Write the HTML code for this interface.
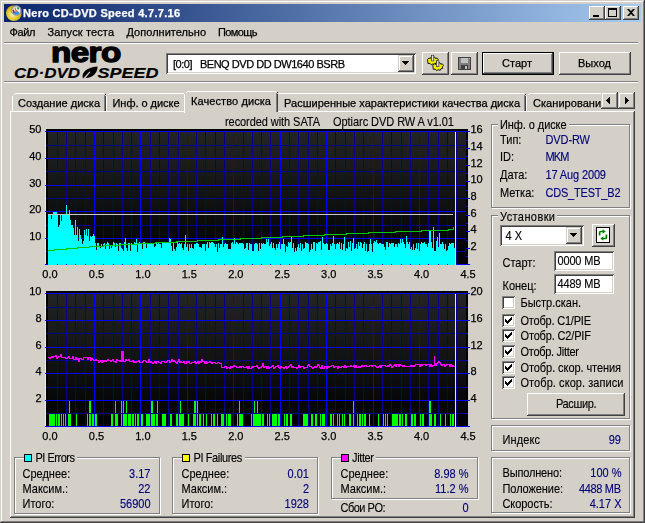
<!DOCTYPE html>
<html lang="ru"><head><meta charset="utf-8"><title>Nero CD-DVD Speed 4.7.7.16</title>
<style>
html,body{margin:0;padding:0}
body{width:645px;height:523px;overflow:hidden;background:#d4d0c8;position:relative;font:11px 'Liberation Sans',sans-serif;color:#000}
#w{position:absolute;left:0;top:0;width:645px;height:523px;overflow:hidden;background:#d4d0c8}
#w div,#w svg{position:absolute}
.t{white-space:pre;line-height:13px;height:13px;font-size:11px;-webkit-text-stroke:0.25px currentColor}
.ms{transform:scaleY(1.14);transform-origin:0 10.5px;-webkit-text-stroke:0.12px currentColor}
.lg{background:#d4d0c8;box-shadow:-2px 0 0 #d4d0c8,2px 0 0 #d4d0c8}
.raised{background:#d4d0c8;box-shadow:inset -1px -1px 0 #404040,inset 1px 1px 0 #fff,inset -2px -2px 0 #808080,inset 2px 2px 0 #d4d0c8}
.raised2{background:#d4d0c8;box-shadow:inset -1px -1px 0 #404040,inset 1px 1px 0 #d4d0c8,inset -2px -2px 0 #808080,inset 2px 2px 0 #fff}
.sunken{background:#fff;box-shadow:inset 1px 1px 0 #808080,inset -1px -1px 0 #fff,inset 2px 2px 0 #404040,inset -2px -2px 0 #d4d0c8}
.grp{border:1px solid #808080;box-shadow:1px 1px 0 #fff,inset 1px 1px 0 #fff;box-sizing:border-box}
.sep{height:1px;background:#808080;box-shadow:0 1px 0 #fff}
.cb{width:13px;height:13px}
.sq{width:6px;height:6px;border:1px solid #000}
.tab{background:#d4d0c8;box-sizing:border-box}
</style></head><body>
<div id="w">
<!-- window frame -->
<div style="left:0;top:0;width:645px;height:523px;box-shadow:inset -1px -1px 0 #404040,inset 1px 1px 0 #d4d0c8,inset -2px -2px 0 #808080,inset 2px 2px 0 #fff"></div>
<!-- title bar -->
<div style="left:4px;top:4px;width:637px;height:18px;background:linear-gradient(to right,#0a246a,#a6caf0)"></div>
<svg style="left:6px;top:5px" width="16" height="16" viewBox="0 0 16 16">
 <defs><radialGradient id="cdg" cx="0.42" cy="0.6" r="0.62"><stop offset="0" stop-color="#f6efb8"/><stop offset="0.45" stop-color="#e6cf3c"/><stop offset="0.8" stop-color="#cdb21c"/><stop offset="1" stop-color="#8c7a18"/></radialGradient></defs>
 <circle cx="7.9" cy="8.1" r="7.9" fill="url(#cdg)"/>
 <circle cx="10.3" cy="5.4" r="4.6" fill="#eef0f6" stroke="#8e92a2" stroke-width="1.3"/>
 <path d="M7 7.500a3.6 3.6 0 0 0 6.5 0.300l-2.5-2.300z" fill="#2a96e6"/>
 <path d="M7.4 3.600l1.5 3.8-1.4 1-0.9-2.800z" fill="#b81c10"/><path d="M8.6 2.400l1.2 0.2 0.4 2.3 1.8 1.8-0.8 0.6-2.2-2z" fill="#f26a2c"/>
 <path d="M10.6 2.200l2.4 0.4 0.3 1.6-1.6 0.200z" fill="#2c9a34"/><circle cx="7.6" cy="4" r="0.7" fill="#f4d820"/>
</svg>
<!-- caption buttons -->
<div class="raised" style="left:589px;top:6px;width:16px;height:14px"></div>
<div class="raised" style="left:605px;top:6px;width:16px;height:14px"></div>
<div class="raised" style="left:623px;top:6px;width:16px;height:14px"></div>
<svg style="left:589px;top:6px" width="50" height="14" viewBox="0 0 50 14" shape-rendering="crispEdges">
 <rect x="4" y="9" width="6" height="2" fill="#000"/>
 <rect x="19" y="2" width="8" height="8" fill="none" stroke="#000" stroke-width="1" transform="translate(0.5,0.5)"/><rect x="19" y="2" width="9" height="2" fill="#000"/>
 <path d="M38 3h2l2 2 2-2h2l-3 3.5 3 3.5h-2l-2-2-2 2h-2l3-3.5z" fill="#000" shape-rendering="auto"/>
</svg>
<!-- separators -->
<div class="sep" style="left:4px;top:42px;width:634px"></div>
<div class="sep" style="left:4px;top:81px;width:634px"></div>
<!-- logo -->
<svg style="left:5px;top:43px" width="160" height="38" viewBox="0 0 160 38">
 <g transform="translate(46.1,19.1) scale(1.055,0.89)"><text x="0" y="0" font-family="'Liberation Sans',sans-serif" font-weight="bold" font-size="31.5" fill="#000" stroke="#000" stroke-width="1.5" stroke-linejoin="round" letter-spacing="-0.6">nero</text></g>
 <text x="9" y="35.4" font-family="'Liberation Sans',sans-serif" font-weight="bold" font-style="italic" font-size="14" fill="#000" stroke="#000" stroke-width="0.15" textLength="66" lengthAdjust="spacingAndGlyphs">CD·DVD</text>
 <path d="M78 35.5c-2-5 3-11.5 14.5-12c0.5 5-4 11.5-12 11.5l5-6-1-0.5z" fill="#000"/>
 <text x="92.5" y="35.4" font-family="'Liberation Sans',sans-serif" font-weight="bold" font-style="italic" font-size="14" fill="#000" stroke="#000" stroke-width="0.15" textLength="61" lengthAdjust="spacingAndGlyphs">SPEED</text>
</svg>
<!-- drive combo -->
<div class="sunken" style="left:166px;top:53px;width:250px;height:21px"></div>
<div class="raised2" style="left:398px;top:55px;width:16px;height:17px"></div>
<svg style="left:398px;top:55px" width="16" height="17" viewBox="0 0 16 17" shape-rendering="crispEdges"><path d="M4 6h7v1h-1v1h-1v1h-1v1h-1v-1h-1v-1h-1v-1h-1z" fill="#000"/></svg>
<!-- toolbar buttons -->
<div class="raised" style="left:422px;top:52px;width:27px;height:23px"></div>
<svg style="left:426px;top:54px" width="20" height="18" viewBox="426 54 20 18">
 <g fill="#f4ec00" stroke="#000" stroke-width="0.9" stroke-linejoin="round">
  <path d="M427.5 59.500l1.5-1.5 1.2 0.6 1-1.600h3.400l1 1.5 1.4-0.5 1.2 1.6-1.2 1.2 0.5 1.6-1.8 0.5-0.8 1.6-2-0.6-1.6 0.9-1.3-1.4-2 0.1-0.2-1.800z"/>
  <path d="M432.8 65.300l1.5-1.5 1.2 0.6 1-1.600h3.400l1 1.5 1.4-0.5 1.2 1.6-1.2 1.2 0.5 1.6-1.8 0.5-0.8 1.6-2-0.6-1.6 0.9-1.3-1.4-2 0.1-0.2-1.800z"/>
 </g>
 <g stroke="#303038" stroke-width="0.7"><rect x="431.4" y="55.3" width="2.4" height="5.6" fill="#b8bcc8"/><rect x="436.5" y="60.8" width="2.4" height="5.6" fill="#b8bcc8"/></g>
 <path d="M432.6 55.600v5M437.7 61.100v5" stroke="#fff" stroke-width="0.7"/>
</svg>
<div class="raised" style="left:451px;top:52px;width:27px;height:23px"></div>
<svg style="left:458px;top:57px" width="13" height="13" viewBox="0 0 13 13" shape-rendering="crispEdges">
 <rect x="0" y="0" width="13" height="13" fill="#404040"/><rect x="1" y="1" width="11" height="11" fill="#808080"/>
 <rect x="3" y="1" width="7" height="5" fill="#c0c0c0"/><rect x="3" y="8" width="7" height="4" fill="#404040"/><rect x="7" y="9" width="2" height="3" fill="#c0c0c0"/><rect x="11" y="1" width="1" height="1" fill="#c0c0c0"/>
</svg>
<div style="left:482px;top:52px;width:72px;height:23px;background:#000"></div>
<div class="raised" style="left:483px;top:53px;width:70px;height:21px"></div>
<div class="raised" style="left:559px;top:52px;width:72px;height:23px"></div>
<!-- tab pane -->
<div style="left:10px;top:111px;width:625px;height:407px;box-shadow:inset -1px -1px 0 #404040,inset 1px 1px 0 #fff,inset -2px -2px 0 #808080,inset 2px 2px 0 #d4d0c8"></div>
<!-- tabs -->
<svg style="left:10px;top:90px" width="625" height="24" viewBox="10 90 625 24" shape-rendering="crispEdges">
 <g fill="none">
 <!-- unselected tab shapes: white top/left, dark right -->
 <path d="M12.5 111V95.5M13.5 94.5h1M14.5 93.5H104" stroke="#fff"/><path d="M104.5 95V111" stroke="#808080"/><path d="M104.5 94.5h1M105.5 95.5V111" stroke="#404040"/>
 <path d="M106.5 111V95.5M107.5 94.5h1M108.5 93.5H184" stroke="#fff"/>
 <path d="M278.5 93.5H524" stroke="#fff"/><path d="M524.5 95V111" stroke="#808080"/><path d="M524.5 94.5h1M525.5 95.5V111" stroke="#404040"/>
 <path d="M526.5 111V95.5M527.5 94.5h1M528.5 93.5H601" stroke="#fff"/>
 </g>
 <!-- selected tab -->
 <rect x="184" y="91" width="94" height="22" fill="#d4d0c8"/>
 <g fill="none"><path d="M184.5 113V93.5M185.5 92.5h1M186.5 91.5H276" stroke="#fff"/><path d="M276.5 93V112" stroke="#808080"/><path d="M276.5 92.5h1M277.5 93.5V112" stroke="#404040"/></g>
</svg>
<div class="t" style="left:533px;top:96.5px;width:68px;overflow:hidden;letter-spacing:0.05px;will-change:transform">Сканирование диска</div>
<div class="raised2" style="left:601px;top:92px;width:17px;height:17px"></div>
<div class="raised2" style="left:618px;top:92px;width:17px;height:17px"></div>
<svg style="left:601px;top:92px" width="34" height="17" viewBox="0 0 34 17" shape-rendering="crispEdges">
 <path d="M9 5v7h-1v-1h-1v-1h-1v-1h-1v-1h1v-1h1v-1h1v-1z" fill="#000"/><path d="M24 5v7h1v-1h1v-1h1v-1h1v-1h-1v-1h-1v-1h-1v-1z" fill="#000"/>
</svg>
<svg class="chart" width="645" height="523" viewBox="0 0 645 523" shape-rendering="crispEdges"><defs><linearGradient id="cg" x1="0" y1="0" x2="0" y2="1"><stop offset="0" stop-color="#242424"/><stop offset="1" stop-color="#000"/></linearGradient></defs><rect x="45" y="130" width="1" height="135" fill="#ece9e2"/><rect x="46" y="129" width="422" height="136" fill="#000"/><rect x="48" y="131" width="418" height="134" fill="url(#cg)"/><rect x="45" y="292" width="1" height="135" fill="#ece9e2"/><rect x="46" y="291" width="422" height="136" fill="#000"/><rect x="48" y="293" width="418" height="134" fill="url(#cg)"/><path d="M49 414h6V427h-6zM56 414h1V427h-1zM58 414h2V427h-2zM61 414h1V427h-1zM63 414h1V427h-1zM65 414h2V427h-2zM68 414h3V427h-3zM76 414h1V427h-1zM87 414h1V427h-1zM89 414h2V427h-2zM92 414h2V427h-2zM95 414h2V427h-2zM103 414h1V427h-1zM111 414h3V427h-3zM115 414h3V427h-3zM121 414h6V427h-6zM128 414h6V427h-6zM135 414h1V427h-1zM137 414h2V427h-2zM141 414h2V427h-2zM146 414h6V427h-6zM151 414h4V427h-4zM156 414h2V427h-2zM162 414h4V427h-4zM170 414h2V427h-2zM176 414h2V427h-2zM179 414h5V427h-5zM187 414h2V427h-2zM193 414h4V427h-4zM199 414h2V427h-2zM203 414h1V427h-1zM206 414h1V427h-1zM211 414h1V427h-1zM213 414h2V427h-2zM217 414h1V427h-1zM221 414h4V427h-4zM226 414h1V427h-1zM228 414h3V427h-3zM233 414h1V427h-1zM237 414h1V427h-1zM239 414h5V427h-5zM251 414h1V427h-1zM253 414h5V427h-5zM256 414h5V427h-5zM262 414h2V427h-2zM267 414h1V427h-1zM269 414h2V427h-2zM272 414h5V427h-5zM278 414h3V427h-3zM284 414h1V427h-1zM286 414h2V427h-2zM290 414h2V427h-2zM298 414h1V427h-1zM303 414h5V427h-5zM311 414h2V427h-2zM315 414h2V427h-2zM320 414h1V427h-1zM322 414h3V427h-3zM330 414h2V427h-2zM333 414h1V427h-1zM337 414h1V427h-1zM339 414h1V427h-1zM342 414h1V427h-1zM344 414h1V427h-1zM349 414h2V427h-2zM353 414h1V427h-1zM357 414h1V427h-1zM359 414h2V427h-2zM362 414h2V427h-2zM363 414h3V427h-3zM369 414h1V427h-1zM378 414h1V427h-1zM383 414h1V427h-1zM385 414h1V427h-1zM387 414h1V427h-1zM392 414h6V427h-6zM399 414h4V427h-4zM405 414h2V427h-2zM411 414h2V427h-2zM414 414h2V427h-2zM419 414h2V427h-2zM422 414h2V427h-2zM428 414h4V427h-4zM434 414h2V427h-2zM440 414h1V427h-1zM445 414h1V427h-1zM450 414h1V427h-1zM452 414h2V427h-2zM69 400h1V427h-1zM89 400h2V427h-2zM115 400h1V427h-1zM121 400h3V427h-3zM126 400h1V427h-1zM151 400h2V427h-2zM157 400h1V427h-1zM180 400h1V427h-1zM194 400h4V427h-4zM233 400h1V427h-1zM239 400h1V427h-1zM254 400h1V427h-1zM257 400h1V427h-1zM353 400h1V427h-1zM429 400h2V427h-2z" fill="#00ff00"/><rect x="57" y="131" width="1" height="134" fill="#00008c"/><rect x="66" y="131" width="1" height="134" fill="#00008c"/><rect x="75" y="131" width="1" height="134" fill="#00008c"/><rect x="85" y="131" width="1" height="134" fill="#00008c"/><rect x="94" y="131" width="1" height="134" fill="#0000ff"/><rect x="103" y="131" width="1" height="134" fill="#00008c"/><rect x="113" y="131" width="1" height="134" fill="#00008c"/><rect x="122" y="131" width="1" height="134" fill="#00008c"/><rect x="131" y="131" width="1" height="134" fill="#00008c"/><rect x="140" y="131" width="1" height="134" fill="#0000ff"/><rect x="150" y="131" width="1" height="134" fill="#00008c"/><rect x="159" y="131" width="1" height="134" fill="#00008c"/><rect x="168" y="131" width="1" height="134" fill="#00008c"/><rect x="178" y="131" width="1" height="134" fill="#00008c"/><rect x="187" y="131" width="1" height="134" fill="#0000ff"/><rect x="196" y="131" width="1" height="134" fill="#00008c"/><rect x="205" y="131" width="1" height="134" fill="#00008c"/><rect x="215" y="131" width="1" height="134" fill="#00008c"/><rect x="224" y="131" width="1" height="134" fill="#00008c"/><rect x="233" y="131" width="1" height="134" fill="#0000ff"/><rect x="243" y="131" width="1" height="134" fill="#00008c"/><rect x="252" y="131" width="1" height="134" fill="#00008c"/><rect x="261" y="131" width="1" height="134" fill="#00008c"/><rect x="270" y="131" width="1" height="134" fill="#00008c"/><rect x="280" y="131" width="1" height="134" fill="#0000ff"/><rect x="289" y="131" width="1" height="134" fill="#00008c"/><rect x="298" y="131" width="1" height="134" fill="#00008c"/><rect x="308" y="131" width="1" height="134" fill="#00008c"/><rect x="317" y="131" width="1" height="134" fill="#00008c"/><rect x="326" y="131" width="1" height="134" fill="#0000ff"/><rect x="335" y="131" width="1" height="134" fill="#00008c"/><rect x="345" y="131" width="1" height="134" fill="#00008c"/><rect x="354" y="131" width="1" height="134" fill="#00008c"/><rect x="363" y="131" width="1" height="134" fill="#00008c"/><rect x="373" y="131" width="1" height="134" fill="#0000ff"/><rect x="382" y="131" width="1" height="134" fill="#00008c"/><rect x="391" y="131" width="1" height="134" fill="#00008c"/><rect x="401" y="131" width="1" height="134" fill="#00008c"/><rect x="410" y="131" width="1" height="134" fill="#00008c"/><rect x="419" y="131" width="1" height="134" fill="#0000ff"/><rect x="428" y="131" width="1" height="134" fill="#00008c"/><rect x="438" y="131" width="1" height="134" fill="#00008c"/><rect x="447" y="131" width="1" height="134" fill="#00008c"/><rect x="456" y="131" width="1" height="134" fill="#00008c"/><rect x="45" y="131" width="421" height="1" fill="#0000ff"/><rect x="46" y="145" width="420" height="1" fill="#00008c"/><rect x="45" y="158" width="421" height="1" fill="#0000ff"/><rect x="46" y="171" width="420" height="1" fill="#00008c"/><rect x="45" y="185" width="421" height="1" fill="#0000ff"/><rect x="46" y="198" width="420" height="1" fill="#00008c"/><rect x="45" y="211" width="421" height="1" fill="#0000ff"/><rect x="46" y="225" width="420" height="1" fill="#00008c"/><rect x="45" y="238" width="421" height="1" fill="#0000ff"/><rect x="46" y="251" width="420" height="1" fill="#00008c"/><rect x="45" y="264" width="421" height="1" fill="#0000ff"/><rect x="45" y="131" width="425" height="1" fill="#0000ff"/><rect x="45" y="264" width="425" height="1" fill="#0000ff"/><rect x="57" y="293" width="1" height="134" fill="#00008c"/><rect x="66" y="293" width="1" height="134" fill="#00008c"/><rect x="75" y="293" width="1" height="134" fill="#00008c"/><rect x="85" y="293" width="1" height="134" fill="#00008c"/><rect x="94" y="293" width="1" height="134" fill="#0000ff"/><rect x="103" y="293" width="1" height="134" fill="#00008c"/><rect x="113" y="293" width="1" height="134" fill="#00008c"/><rect x="122" y="293" width="1" height="134" fill="#00008c"/><rect x="131" y="293" width="1" height="134" fill="#00008c"/><rect x="140" y="293" width="1" height="134" fill="#0000ff"/><rect x="150" y="293" width="1" height="134" fill="#00008c"/><rect x="159" y="293" width="1" height="134" fill="#00008c"/><rect x="168" y="293" width="1" height="134" fill="#00008c"/><rect x="178" y="293" width="1" height="134" fill="#00008c"/><rect x="187" y="293" width="1" height="134" fill="#0000ff"/><rect x="196" y="293" width="1" height="134" fill="#00008c"/><rect x="205" y="293" width="1" height="134" fill="#00008c"/><rect x="215" y="293" width="1" height="134" fill="#00008c"/><rect x="224" y="293" width="1" height="134" fill="#00008c"/><rect x="233" y="293" width="1" height="134" fill="#0000ff"/><rect x="243" y="293" width="1" height="134" fill="#00008c"/><rect x="252" y="293" width="1" height="134" fill="#00008c"/><rect x="261" y="293" width="1" height="134" fill="#00008c"/><rect x="270" y="293" width="1" height="134" fill="#00008c"/><rect x="280" y="293" width="1" height="134" fill="#0000ff"/><rect x="289" y="293" width="1" height="134" fill="#00008c"/><rect x="298" y="293" width="1" height="134" fill="#00008c"/><rect x="308" y="293" width="1" height="134" fill="#00008c"/><rect x="317" y="293" width="1" height="134" fill="#00008c"/><rect x="326" y="293" width="1" height="134" fill="#0000ff"/><rect x="335" y="293" width="1" height="134" fill="#00008c"/><rect x="345" y="293" width="1" height="134" fill="#00008c"/><rect x="354" y="293" width="1" height="134" fill="#00008c"/><rect x="363" y="293" width="1" height="134" fill="#00008c"/><rect x="373" y="293" width="1" height="134" fill="#0000ff"/><rect x="382" y="293" width="1" height="134" fill="#00008c"/><rect x="391" y="293" width="1" height="134" fill="#00008c"/><rect x="401" y="293" width="1" height="134" fill="#00008c"/><rect x="410" y="293" width="1" height="134" fill="#00008c"/><rect x="419" y="293" width="1" height="134" fill="#0000ff"/><rect x="428" y="293" width="1" height="134" fill="#00008c"/><rect x="438" y="293" width="1" height="134" fill="#00008c"/><rect x="447" y="293" width="1" height="134" fill="#00008c"/><rect x="456" y="293" width="1" height="134" fill="#00008c"/><rect x="45" y="293" width="421" height="1" fill="#0000ff"/><rect x="46" y="307" width="420" height="1" fill="#00008c"/><rect x="45" y="320" width="421" height="1" fill="#0000ff"/><rect x="46" y="333" width="420" height="1" fill="#00008c"/><rect x="45" y="347" width="421" height="1" fill="#0000ff"/><rect x="46" y="360" width="420" height="1" fill="#00008c"/><rect x="45" y="373" width="421" height="1" fill="#0000ff"/><rect x="46" y="387" width="420" height="1" fill="#00008c"/><rect x="45" y="400" width="421" height="1" fill="#0000ff"/><rect x="46" y="413" width="420" height="1" fill="#00008c"/><rect x="45" y="426" width="421" height="1" fill="#0000ff"/><rect x="45" y="293" width="425" height="1" fill="#0000ff"/><rect x="45" y="426" width="425" height="1" fill="#0000ff"/><rect x="466" y="264" width="4" height="1" fill="#0000ff"/><rect x="466" y="256" width="2" height="1" fill="#0000ff"/><rect x="466" y="248" width="4" height="1" fill="#0000ff"/><rect x="466" y="240" width="2" height="1" fill="#0000ff"/><rect x="466" y="231" width="4" height="1" fill="#0000ff"/><rect x="466" y="223" width="2" height="1" fill="#0000ff"/><rect x="466" y="215" width="4" height="1" fill="#0000ff"/><rect x="466" y="206" width="2" height="1" fill="#0000ff"/><rect x="466" y="198" width="4" height="1" fill="#0000ff"/><rect x="466" y="190" width="2" height="1" fill="#0000ff"/><rect x="466" y="181" width="4" height="1" fill="#0000ff"/><rect x="466" y="173" width="2" height="1" fill="#0000ff"/><rect x="466" y="165" width="4" height="1" fill="#0000ff"/><rect x="466" y="156" width="2" height="1" fill="#0000ff"/><rect x="466" y="148" width="4" height="1" fill="#0000ff"/><rect x="466" y="140" width="2" height="1" fill="#0000ff"/><rect x="466" y="131" width="4" height="1" fill="#0000ff"/><rect x="466" y="426" width="4" height="1" fill="#0000ff"/><rect x="466" y="413" width="2" height="1" fill="#0000ff"/><rect x="466" y="400" width="4" height="1" fill="#0000ff"/><rect x="466" y="387" width="2" height="1" fill="#0000ff"/><rect x="466" y="373" width="4" height="1" fill="#0000ff"/><rect x="466" y="360" width="2" height="1" fill="#0000ff"/><rect x="466" y="347" width="4" height="1" fill="#0000ff"/><rect x="466" y="333" width="2" height="1" fill="#0000ff"/><rect x="466" y="320" width="4" height="1" fill="#0000ff"/><rect x="466" y="307" width="2" height="1" fill="#0000ff"/><rect x="466" y="293" width="4" height="1" fill="#0000ff"/><path d="M48 215h1V265h-1zM49 215h1V265h-1zM50 215h1V265h-1zM51 219h1V265h-1zM52 215h1V265h-1zM53 212h1V265h-1zM54 212h1V265h-1zM55 212h1V265h-1zM56 212h1V265h-1zM57 215h1V265h-1zM58 227h1V265h-1zM59 225h1V265h-1zM60 215h1V265h-1zM61 221h1V265h-1zM62 215h1V265h-1zM63 215h1V265h-1zM64 215h1V265h-1zM65 214h1V265h-1zM66 205h1V265h-1zM67 214h1V265h-1zM68 215h1V265h-1zM69 210h1V265h-1zM70 220h1V265h-1zM71 225h1V265h-1zM72 225h1V265h-1zM73 228h1V265h-1zM74 235h1V265h-1zM75 220h1V265h-1zM76 235h1V265h-1zM77 227h1V265h-1zM78 241h1V265h-1zM79 229h1V265h-1zM80 235h1V265h-1zM81 239h1V265h-1zM82 244h1V265h-1zM83 241h1V265h-1zM84 230h1V265h-1zM85 235h1V265h-1zM86 229h1V265h-1zM87 236h1V265h-1zM88 229h1V265h-1zM89 241h1V265h-1zM90 236h1V265h-1zM91 237h1V265h-1zM92 236h1V265h-1zM93 234h1V265h-1zM94 236h1V265h-1zM95 243h1V265h-1zM96 250h1V265h-1zM97 243h1V265h-1zM98 243h1V265h-1zM99 246h1V265h-1zM100 248h1V265h-1zM101 244h1V265h-1zM102 247h1V265h-1zM103 244h1V265h-1zM104 243h1V265h-1zM105 249h1V265h-1zM106 244h1V265h-1zM107 242h1V265h-1zM108 243h1V265h-1zM109 249h1V265h-1zM110 246h1V265h-1zM111 248h1V265h-1zM112 246h1V265h-1zM113 242h1V265h-1zM114 243h1V265h-1zM115 247h1V265h-1zM116 243h1V265h-1zM117 244h1V265h-1zM118 251h1V265h-1zM119 243h1V265h-1zM120 243h1V265h-1zM121 248h1V265h-1zM122 249h1V265h-1zM123 251h1V265h-1zM124 242h1V265h-1zM125 238h1V265h-1zM126 248h1V265h-1zM127 251h1V265h-1zM128 243h1V265h-1zM129 243h1V265h-1zM130 251h1V265h-1zM131 243h1V265h-1zM132 244h1V265h-1zM133 244h1V265h-1zM134 242h1V265h-1zM135 243h1V265h-1zM136 239h1V265h-1zM137 252h1V265h-1zM138 244h1V265h-1zM139 242h1V265h-1zM140 244h1V265h-1zM141 244h1V265h-1zM142 249h1V265h-1zM143 242h1V265h-1zM144 242h1V265h-1zM145 244h1V265h-1zM146 248h1V265h-1zM147 244h1V265h-1zM148 244h1V265h-1zM149 244h1V265h-1zM150 243h1V265h-1zM151 243h1V265h-1zM152 243h1V265h-1zM153 243h1V265h-1zM154 247h1V265h-1zM155 246h1V265h-1zM156 243h1V265h-1zM157 244h1V265h-1zM158 243h1V265h-1zM159 244h1V265h-1zM160 244h1V265h-1zM161 248h1V265h-1zM162 243h1V265h-1zM163 243h1V265h-1zM164 243h1V265h-1zM165 243h1V265h-1zM166 243h1V265h-1zM167 242h1V265h-1zM168 242h1V265h-1zM169 238h1V265h-1zM170 239h1V265h-1zM171 246h1V265h-1zM172 251h1V265h-1zM173 242h1V265h-1zM174 249h1V265h-1zM175 251h1V265h-1zM176 247h1V265h-1zM177 242h1V265h-1zM178 244h1V265h-1zM179 243h1V265h-1zM180 244h1V265h-1zM181 243h1V265h-1zM182 248h1V265h-1zM183 250h1V265h-1zM184 244h1V265h-1zM185 235h1V265h-1zM186 247h1V265h-1zM187 244h1V265h-1zM188 251h1V265h-1zM189 244h1V265h-1zM190 248h1V265h-1zM191 244h1V265h-1zM192 248h1V265h-1zM193 249h1V265h-1zM194 244h1V265h-1zM195 244h1V265h-1zM196 243h1V265h-1zM197 243h1V265h-1zM198 244h1V265h-1zM199 247h1V265h-1zM200 247h1V265h-1zM201 248h1V265h-1zM202 244h1V265h-1zM203 244h1V265h-1zM204 244h1V265h-1zM205 251h1V265h-1zM206 244h1V265h-1zM207 242h1V265h-1zM208 248h1V265h-1zM209 242h1V265h-1zM210 243h1V265h-1zM211 242h1V265h-1zM212 242h1V265h-1zM213 243h1V265h-1zM214 244h1V265h-1zM215 247h1V265h-1zM216 244h1V265h-1zM217 252h1V265h-1zM218 243h1V265h-1zM219 248h1V265h-1zM220 244h1V265h-1zM221 244h1V265h-1zM222 237h1V265h-1zM223 247h1V265h-1zM224 244h1V265h-1zM225 243h1V265h-1zM226 244h1V265h-1zM227 244h1V265h-1zM228 249h1V265h-1zM229 249h1V265h-1zM230 249h1V265h-1zM231 243h1V265h-1zM232 242h1V265h-1zM233 244h1V265h-1zM234 238h1V265h-1zM235 244h1V265h-1zM236 242h1V265h-1zM237 243h1V265h-1zM238 244h1V265h-1zM239 243h1V265h-1zM240 243h1V265h-1zM241 243h1V265h-1zM242 243h1V265h-1zM243 244h1V265h-1zM244 249h1V265h-1zM245 248h1V265h-1zM246 243h1V265h-1zM247 243h1V265h-1zM248 250h1V265h-1zM249 243h1V265h-1zM250 244h1V265h-1zM251 244h1V265h-1zM252 251h1V265h-1zM253 251h1V265h-1zM254 244h1V265h-1zM255 243h1V265h-1zM256 243h1V265h-1zM257 244h1V265h-1zM258 251h1V265h-1zM259 243h1V265h-1zM260 249h1V265h-1zM261 243h1V265h-1zM262 244h1V265h-1zM263 243h1V265h-1zM264 244h1V265h-1zM265 244h1V265h-1zM266 239h1V265h-1zM267 242h1V265h-1zM268 239h1V265h-1zM269 246h1V265h-1zM270 244h1V265h-1zM271 242h1V265h-1zM272 248h1V265h-1zM273 243h1V265h-1zM274 248h1V265h-1zM275 250h1V265h-1zM276 244h1V265h-1zM277 248h1V265h-1zM278 244h1V265h-1zM279 242h1V265h-1zM280 249h1V265h-1zM281 244h1V265h-1zM282 244h1V265h-1zM283 239h1V265h-1zM284 244h1V265h-1zM285 252h1V265h-1zM286 246h1V265h-1zM287 247h1V265h-1zM288 242h1V265h-1zM289 243h1V265h-1zM290 242h1V265h-1zM291 237h1V265h-1zM292 248h1V265h-1zM293 243h1V265h-1zM294 252h1V265h-1zM295 248h1V265h-1zM296 251h1V265h-1zM297 247h1V265h-1zM298 244h1V265h-1zM299 248h1V265h-1zM300 243h1V265h-1zM301 251h1V265h-1zM302 244h1V265h-1zM303 249h1V265h-1zM304 248h1V265h-1zM305 242h1V265h-1zM306 243h1V265h-1zM307 243h1V265h-1zM308 244h1V265h-1zM309 252h1V265h-1zM310 250h1V265h-1zM311 244h1V265h-1zM312 249h1V265h-1zM313 242h1V265h-1zM314 242h1V265h-1zM315 251h1V265h-1zM316 243h1V265h-1zM317 244h1V265h-1zM318 242h1V265h-1zM319 242h1V265h-1zM320 241h1V265h-1zM321 250h1V265h-1zM322 237h1V265h-1zM323 243h1V265h-1zM324 244h1V265h-1zM325 244h1V265h-1zM326 243h1V265h-1zM327 244h1V265h-1zM328 250h1V265h-1zM329 250h1V265h-1zM330 244h1V265h-1zM331 246h1V265h-1zM332 243h1V265h-1zM333 236h1V265h-1zM334 244h1V265h-1zM335 249h1V265h-1zM336 244h1V265h-1zM337 243h1V265h-1zM338 244h1V265h-1zM339 242h1V265h-1zM340 249h1V265h-1zM341 243h1V265h-1zM342 250h1V265h-1zM343 244h1V265h-1zM344 237h1V265h-1zM345 251h1V265h-1zM346 248h1V265h-1zM347 249h1V265h-1zM348 242h1V265h-1zM349 247h1V265h-1zM350 241h1V265h-1zM351 251h1V265h-1zM352 243h1V265h-1zM353 238h1V265h-1zM354 249h1V265h-1zM355 248h1V265h-1zM356 244h1V265h-1zM357 249h1V265h-1zM358 242h1V265h-1zM359 246h1V265h-1zM360 242h1V265h-1zM361 243h1V265h-1zM362 248h1V265h-1zM363 244h1V265h-1zM364 242h1V265h-1zM365 251h1V265h-1zM366 244h1V265h-1zM367 252h1V265h-1zM368 251h1V265h-1zM369 244h1V265h-1zM370 239h1V265h-1zM371 244h1V265h-1zM372 252h1V265h-1zM373 243h1V265h-1zM374 241h1V265h-1zM375 242h1V265h-1zM376 240h1V265h-1zM377 243h1V265h-1zM378 244h1V265h-1zM379 243h1V265h-1zM380 243h1V265h-1zM381 244h1V265h-1zM382 244h1V265h-1zM383 244h1V265h-1zM384 247h1V265h-1zM385 250h1V265h-1zM386 242h1V265h-1zM387 242h1V265h-1zM388 247h1V265h-1zM389 243h1V265h-1zM390 244h1V265h-1zM391 243h1V265h-1zM392 243h1V265h-1zM393 243h1V265h-1zM394 247h1V265h-1zM395 244h1V265h-1zM396 244h1V265h-1zM397 247h1V265h-1zM398 243h1V265h-1zM399 244h1V265h-1zM400 239h1V265h-1zM401 243h1V265h-1zM402 239h1V265h-1zM403 242h1V265h-1zM404 244h1V265h-1zM405 248h1V265h-1zM406 236h1V265h-1zM407 242h1V265h-1zM408 244h1V265h-1zM409 242h1V265h-1zM410 249h1V265h-1zM411 247h1V265h-1zM412 250h1V265h-1zM413 244h1V265h-1zM414 250h1V265h-1zM415 248h1V265h-1zM416 243h1V265h-1zM417 249h1V265h-1zM418 243h1V265h-1zM419 251h1V265h-1zM420 244h1V265h-1zM421 242h1V265h-1zM422 243h1V265h-1zM423 243h1V265h-1zM424 242h1V265h-1zM425 244h1V265h-1zM426 244h1V265h-1zM427 247h1V265h-1zM428 243h1V265h-1zM429 231h1V265h-1zM430 231h1V265h-1zM431 242h1V265h-1zM432 248h1V265h-1zM433 227h1V265h-1zM434 251h1V265h-1zM435 251h1V265h-1zM436 241h1V265h-1zM437 237h1V265h-1zM438 247h1V265h-1zM439 233h1V265h-1zM440 244h1V265h-1zM441 244h1V265h-1zM442 242h1V265h-1zM443 244h1V265h-1zM444 249h1V265h-1zM445 244h1V265h-1zM446 251h1V265h-1zM447 250h1V265h-1zM448 246h1V265h-1zM449 243h1V265h-1zM450 244h1V265h-1zM451 243h1V265h-1zM452 243h1V265h-1zM453 243h1V265h-1zM454 248h1V265h-1z" fill="#00ffff"/><rect x="57" y="264" width="1" height="1" fill="#0000ff"/><rect x="66" y="264" width="1" height="1" fill="#0000ff"/><rect x="75" y="264" width="1" height="1" fill="#0000ff"/><rect x="85" y="264" width="1" height="1" fill="#0000ff"/><rect x="94" y="264" width="1" height="1" fill="#0000ff"/><rect x="103" y="264" width="1" height="1" fill="#0000ff"/><rect x="113" y="264" width="1" height="1" fill="#0000ff"/><rect x="122" y="264" width="1" height="1" fill="#0000ff"/><rect x="131" y="264" width="1" height="1" fill="#0000ff"/><rect x="140" y="264" width="1" height="1" fill="#0000ff"/><rect x="150" y="264" width="1" height="1" fill="#0000ff"/><rect x="159" y="264" width="1" height="1" fill="#0000ff"/><rect x="168" y="264" width="1" height="1" fill="#0000ff"/><rect x="178" y="264" width="1" height="1" fill="#0000ff"/><rect x="187" y="264" width="1" height="1" fill="#0000ff"/><rect x="196" y="264" width="1" height="1" fill="#0000ff"/><rect x="205" y="264" width="1" height="1" fill="#0000ff"/><rect x="215" y="264" width="1" height="1" fill="#0000ff"/><rect x="224" y="264" width="1" height="1" fill="#0000ff"/><rect x="233" y="264" width="1" height="1" fill="#0000ff"/><rect x="243" y="264" width="1" height="1" fill="#0000ff"/><rect x="252" y="264" width="1" height="1" fill="#0000ff"/><rect x="261" y="264" width="1" height="1" fill="#0000ff"/><rect x="270" y="264" width="1" height="1" fill="#0000ff"/><rect x="280" y="264" width="1" height="1" fill="#0000ff"/><rect x="289" y="264" width="1" height="1" fill="#0000ff"/><rect x="298" y="264" width="1" height="1" fill="#0000ff"/><rect x="308" y="264" width="1" height="1" fill="#0000ff"/><rect x="317" y="264" width="1" height="1" fill="#0000ff"/><rect x="326" y="264" width="1" height="1" fill="#0000ff"/><rect x="335" y="264" width="1" height="1" fill="#0000ff"/><rect x="345" y="264" width="1" height="1" fill="#0000ff"/><rect x="354" y="264" width="1" height="1" fill="#0000ff"/><rect x="363" y="264" width="1" height="1" fill="#0000ff"/><rect x="373" y="264" width="1" height="1" fill="#0000ff"/><rect x="382" y="264" width="1" height="1" fill="#0000ff"/><rect x="391" y="264" width="1" height="1" fill="#0000ff"/><rect x="401" y="264" width="1" height="1" fill="#0000ff"/><rect x="410" y="264" width="1" height="1" fill="#0000ff"/><rect x="419" y="264" width="1" height="1" fill="#0000ff"/><rect x="428" y="264" width="1" height="1" fill="#0000ff"/><rect x="438" y="264" width="1" height="1" fill="#0000ff"/><rect x="447" y="264" width="1" height="1" fill="#0000ff"/><rect x="48" y="214" width="405" height="1" fill="#c8c8c8"/><path d="M48 250h1v1h-1zM49 250h1v1h-1zM50 250h1v1h-1zM51 250h1v1h-1zM52 250h1v1h-1zM53 250h1v1h-1zM54 249h1v2h-1zM55 249h1v1h-1zM56 249h1v1h-1zM57 249h1v1h-1zM58 249h1v1h-1zM59 249h1v1h-1zM60 249h1v1h-1zM61 249h1v1h-1zM62 249h1v1h-1zM63 249h1v1h-1zM64 249h1v1h-1zM65 249h1v1h-1zM66 248h1v2h-1zM67 248h1v1h-1zM68 248h1v1h-1zM69 248h1v1h-1zM70 248h1v1h-1zM71 248h1v1h-1zM72 248h1v1h-1zM73 248h1v1h-1zM74 248h1v1h-1zM75 248h1v1h-1zM76 248h1v1h-1zM77 247h1v2h-1zM78 247h1v1h-1zM79 247h1v1h-1zM80 247h1v1h-1zM81 247h1v1h-1zM82 247h1v1h-1zM83 247h1v1h-1zM84 247h1v1h-1zM85 247h1v1h-1zM86 247h1v1h-1zM87 247h1v1h-1zM88 247h1v1h-1zM89 246h1v2h-1zM90 246h1v1h-1zM91 246h1v1h-1zM92 246h1v1h-1zM93 246h1v1h-1zM94 246h1v1h-1zM95 246h1v1h-1zM96 246h1v1h-1zM97 246h1v1h-1zM98 246h1v1h-1zM99 246h1v1h-1zM100 246h1v1h-1zM101 246h1v1h-1zM102 246h1v1h-1zM103 245h1v2h-1zM104 245h1v1h-1zM105 245h1v1h-1zM106 245h1v1h-1zM107 245h1v1h-1zM108 245h1v1h-1zM109 245h1v1h-1zM110 245h1v1h-1zM111 245h1v1h-1zM112 245h1v1h-1zM113 245h1v1h-1zM114 245h1v1h-1zM115 245h1v1h-1zM116 245h1v1h-1zM117 245h1v1h-1zM118 245h1v1h-1zM119 245h1v1h-1zM120 244h1v2h-1zM121 244h1v1h-1zM122 244h1v1h-1zM123 244h1v1h-1zM124 244h1v1h-1zM125 244h1v1h-1zM126 244h1v1h-1zM127 244h1v1h-1zM128 244h1v1h-1zM129 244h1v1h-1zM130 244h1v1h-1zM131 244h1v1h-1zM132 244h1v1h-1zM133 244h1v1h-1zM134 244h1v1h-1zM135 244h1v1h-1zM136 244h1v1h-1zM137 243h1v2h-1zM138 243h1v1h-1zM139 243h1v1h-1zM140 243h1v1h-1zM141 243h1v1h-1zM142 243h1v1h-1zM143 243h1v1h-1zM144 243h1v1h-1zM145 243h1v1h-1zM146 243h1v1h-1zM147 243h1v1h-1zM148 243h1v1h-1zM149 243h1v1h-1zM150 243h1v1h-1zM151 243h1v1h-1zM152 243h1v1h-1zM153 243h1v1h-1zM154 243h1v1h-1zM155 242h1v2h-1zM156 242h1v1h-1zM157 242h1v1h-1zM158 242h1v1h-1zM159 242h1v1h-1zM160 242h1v1h-1zM161 242h1v1h-1zM162 242h1v1h-1zM163 242h1v1h-1zM164 242h1v1h-1zM165 242h1v1h-1zM166 242h1v1h-1zM167 242h1v1h-1zM168 242h1v1h-1zM169 242h1v1h-1zM170 242h1v1h-1zM171 242h1v1h-1zM172 242h1v1h-1zM173 242h1v1h-1zM174 242h1v1h-1zM175 242h1v1h-1zM176 241h1v2h-1zM177 241h1v1h-1zM178 241h1v1h-1zM179 241h1v1h-1zM180 241h1v1h-1zM181 241h1v1h-1zM182 241h1v1h-1zM183 241h1v1h-1zM184 241h1v1h-1zM185 241h1v1h-1zM186 241h1v1h-1zM187 241h1v1h-1zM188 241h1v1h-1zM189 241h1v1h-1zM190 241h1v1h-1zM191 241h1v1h-1zM192 241h1v1h-1zM193 241h1v1h-1zM194 241h1v1h-1zM195 241h1v1h-1zM196 241h1v1h-1zM197 240h1v2h-1zM198 240h1v1h-1zM199 240h1v1h-1zM200 240h1v1h-1zM201 240h1v1h-1zM202 240h1v1h-1zM203 240h1v1h-1zM204 240h1v1h-1zM205 240h1v1h-1zM206 240h1v1h-1zM207 240h1v1h-1zM208 240h1v1h-1zM209 240h1v1h-1zM210 240h1v1h-1zM211 240h1v1h-1zM212 240h1v1h-1zM213 240h1v1h-1zM214 240h1v1h-1zM215 240h1v1h-1zM216 240h1v1h-1zM217 240h1v1h-1zM218 239h1v2h-1zM219 239h1v1h-1zM220 239h1v1h-1zM221 239h1v1h-1zM222 239h1v1h-1zM223 239h1v1h-1zM224 239h1v1h-1zM225 239h1v1h-1zM226 239h1v1h-1zM227 239h1v1h-1zM228 239h1v1h-1zM229 239h1v1h-1zM230 239h1v1h-1zM231 239h1v1h-1zM232 239h1v1h-1zM233 239h1v1h-1zM234 239h1v1h-1zM235 239h1v1h-1zM236 239h1v1h-1zM237 239h1v1h-1zM238 239h1v1h-1zM239 239h1v1h-1zM240 238h1v2h-1zM241 238h1v1h-1zM242 238h1v1h-1zM243 238h1v1h-1zM244 238h1v1h-1zM245 238h1v1h-1zM246 238h1v1h-1zM247 238h1v1h-1zM248 238h1v1h-1zM249 238h1v1h-1zM250 238h1v1h-1zM251 238h1v1h-1zM252 238h1v1h-1zM253 238h1v1h-1zM254 238h1v1h-1zM255 238h1v1h-1zM256 238h1v1h-1zM257 238h1v1h-1zM258 238h1v1h-1zM259 238h1v1h-1zM260 238h1v1h-1zM261 237h1v2h-1zM262 237h1v1h-1zM263 237h1v1h-1zM264 237h1v1h-1zM265 237h1v1h-1zM266 237h1v1h-1zM267 237h1v1h-1zM268 237h1v1h-1zM269 237h1v1h-1zM270 237h1v1h-1zM271 237h1v1h-1zM272 237h1v1h-1zM273 237h1v1h-1zM274 237h1v1h-1zM275 237h1v1h-1zM276 237h1v1h-1zM277 237h1v1h-1zM278 237h1v1h-1zM279 237h1v1h-1zM280 237h1v1h-1zM281 237h1v1h-1zM282 236h1v2h-1zM283 236h1v1h-1zM284 236h1v1h-1zM285 236h1v1h-1zM286 236h1v1h-1zM287 236h1v1h-1zM288 236h1v1h-1zM289 236h1v1h-1zM290 236h1v1h-1zM291 236h1v1h-1zM292 236h1v1h-1zM293 236h1v1h-1zM294 236h1v1h-1zM295 236h1v1h-1zM296 236h1v1h-1zM297 236h1v1h-1zM298 236h1v1h-1zM299 236h1v1h-1zM300 236h1v1h-1zM301 236h1v1h-1zM302 236h1v1h-1zM303 235h1v2h-1zM304 235h1v1h-1zM305 235h1v1h-1zM306 235h1v1h-1zM307 235h1v1h-1zM308 235h1v1h-1zM309 235h1v1h-1zM310 235h1v1h-1zM311 235h1v1h-1zM312 235h1v1h-1zM313 235h1v1h-1zM314 235h1v1h-1zM315 235h1v1h-1zM316 235h1v1h-1zM317 235h1v1h-1zM318 235h1v1h-1zM319 235h1v1h-1zM320 235h1v1h-1zM321 235h1v1h-1zM322 235h1v1h-1zM323 235h1v1h-1zM324 234h1v2h-1zM325 234h1v1h-1zM326 234h1v1h-1zM327 234h1v1h-1zM328 234h1v1h-1zM329 234h1v1h-1zM330 234h1v1h-1zM331 234h1v1h-1zM332 234h1v1h-1zM333 234h1v1h-1zM334 234h1v1h-1zM335 234h1v1h-1zM336 234h1v1h-1zM337 234h1v1h-1zM338 234h1v1h-1zM339 234h1v1h-1zM340 234h1v1h-1zM341 234h1v1h-1zM342 234h1v1h-1zM343 234h1v1h-1zM344 234h1v1h-1zM345 234h1v1h-1zM346 233h1v2h-1zM347 233h1v1h-1zM348 233h1v1h-1zM349 233h1v1h-1zM350 233h1v1h-1zM351 233h1v1h-1zM352 233h1v1h-1zM353 233h1v1h-1zM354 233h1v1h-1zM355 233h1v1h-1zM356 233h1v1h-1zM357 233h1v1h-1zM358 233h1v1h-1zM359 233h1v1h-1zM360 233h1v1h-1zM361 233h1v1h-1zM362 233h1v1h-1zM363 233h1v1h-1zM364 233h1v1h-1zM365 233h1v1h-1zM366 233h1v1h-1zM367 233h1v1h-1zM368 232h1v2h-1zM369 232h1v1h-1zM370 232h1v1h-1zM371 232h1v1h-1zM372 232h1v1h-1zM373 232h1v1h-1zM374 232h1v1h-1zM375 232h1v1h-1zM376 232h1v1h-1zM377 232h1v1h-1zM378 232h1v1h-1zM379 232h1v1h-1zM380 232h1v1h-1zM381 232h1v1h-1zM382 232h1v1h-1zM383 232h1v1h-1zM384 232h1v1h-1zM385 232h1v1h-1zM386 232h1v1h-1zM387 232h1v1h-1zM388 232h1v1h-1zM389 232h1v1h-1zM390 232h1v1h-1zM391 232h1v1h-1zM392 232h1v1h-1zM393 232h1v1h-1zM394 232h1v1h-1zM395 231h1v2h-1zM396 231h1v1h-1zM397 231h1v1h-1zM398 231h1v1h-1zM399 231h1v1h-1zM400 231h1v1h-1zM401 231h1v1h-1zM402 231h1v1h-1zM403 231h1v1h-1zM404 231h1v1h-1zM405 231h1v1h-1zM406 231h1v1h-1zM407 231h1v1h-1zM408 231h1v1h-1zM409 231h1v1h-1zM410 231h1v1h-1zM411 231h1v1h-1zM412 231h1v1h-1zM413 231h1v1h-1zM414 231h1v1h-1zM415 231h1v1h-1zM416 231h1v1h-1zM417 231h1v1h-1zM418 231h1v1h-1zM419 231h1v1h-1zM420 231h1v1h-1zM421 230h1v2h-1zM422 230h1v1h-1zM423 230h1v1h-1zM424 230h1v1h-1zM425 230h1v1h-1zM426 230h1v1h-1zM427 230h1v1h-1zM428 230h1v1h-1zM429 230h1v1h-1zM430 230h1v1h-1zM431 230h1v1h-1zM432 230h1v1h-1zM433 230h1v1h-1zM434 230h1v1h-1zM435 230h1v1h-1zM436 230h1v1h-1zM437 230h1v1h-1zM438 230h1v1h-1zM439 230h1v1h-1zM440 230h1v1h-1zM441 230h1v1h-1zM442 230h1v1h-1zM443 230h1v1h-1zM444 230h1v1h-1zM445 230h1v1h-1zM446 230h1v1h-1zM447 230h1v1h-1zM448 229h1v2h-1zM449 229h1v1h-1zM450 229h1v1h-1zM451 229h1v1h-1zM452 229h1v1h-1zM453 229h1v1h-1z" fill="#00c800"/><rect x="453" y="227" width="1" height="3" fill="#00c800"/><path d="M48 357h1v1h-1zM49 357h1v2h-1zM50 357h1v2h-1zM51 356h1v2h-1zM52 356h1v2h-1zM53 356h1v2h-1zM54 356h1v1h-1zM55 355h1v2h-1zM56 355h1v4h-1zM57 357h1v2h-1zM58 356h1v2h-1zM59 356h1v1h-1zM60 354h1v3h-1zM61 354h1v4h-1zM62 357h1v1h-1zM63 357h1v1h-1zM64 357h1v1h-1zM65 357h1v2h-1zM66 358h1v1h-1zM67 357h1v2h-1zM68 356h1v2h-1zM69 356h1v3h-1zM70 358h1v1h-1zM71 358h1v1h-1zM72 356h1v3h-1zM73 356h1v4h-1zM74 359h1v1h-1zM75 357h1v3h-1zM76 357h1v3h-1zM77 358h1v2h-1zM78 358h1v4h-1zM79 358h1v4h-1zM80 358h1v1h-1zM81 358h1v2h-1zM82 359h1v1h-1zM83 357h1v3h-1zM84 357h1v1h-1zM85 357h1v1h-1zM86 357h1v1h-1zM87 357h1v3h-1zM88 357h1v3h-1zM89 357h1v1h-1zM90 357h1v4h-1zM91 358h1v3h-1zM92 358h1v2h-1zM93 359h1v2h-1zM94 360h1v1h-1zM95 359h1v2h-1zM96 359h1v2h-1zM97 360h1v1h-1zM98 360h1v3h-1zM99 361h1v2h-1zM100 360h1v2h-1zM101 360h1v3h-1zM102 360h1v3h-1zM103 360h1v2h-1zM104 360h1v2h-1zM105 360h1v2h-1zM106 360h1v2h-1zM107 359h1v2h-1zM108 359h1v2h-1zM109 360h1v1h-1zM110 360h1v2h-1zM111 360h1v2h-1zM112 359h1v2h-1zM113 359h1v3h-1zM114 361h1v1h-1zM115 361h1v2h-1zM116 359h1v4h-1zM117 359h1v2h-1zM118 360h1v1h-1zM119 360h1v2h-1zM120 360h1v2h-1zM121 351h1v11h-1zM122 351h1v11h-1zM123 351h1v11h-1zM124 361h1v1h-1zM125 359h1v3h-1zM126 359h1v2h-1zM127 360h1v1h-1zM128 359h1v2h-1zM129 359h1v3h-1zM130 361h1v1h-1zM131 361h1v1h-1zM132 360h1v2h-1zM133 360h1v3h-1zM134 361h1v2h-1zM135 361h1v2h-1zM136 361h1v2h-1zM137 361h1v1h-1zM138 360h1v2h-1zM139 360h1v3h-1zM140 362h1v1h-1zM141 362h1v1h-1zM142 361h1v2h-1zM143 360h1v2h-1zM144 360h1v1h-1zM145 360h1v2h-1zM146 361h1v2h-1zM147 362h1v1h-1zM148 359h1v4h-1zM149 359h1v4h-1zM150 361h1v2h-1zM151 361h1v2h-1zM152 362h1v2h-1zM153 362h1v2h-1zM154 361h1v2h-1zM155 361h1v3h-1zM156 361h1v3h-1zM157 361h1v1h-1zM158 361h1v2h-1zM159 362h1v1h-1zM160 362h1v2h-1zM161 361h1v3h-1zM162 361h1v1h-1zM163 361h1v1h-1zM164 361h1v2h-1zM165 362h1v1h-1zM166 361h1v2h-1zM167 360h1v2h-1zM168 360h1v1h-1zM169 360h1v3h-1zM170 361h1v2h-1zM171 359h1v3h-1zM172 359h1v3h-1zM173 360h1v2h-1zM174 360h1v2h-1zM175 361h1v2h-1zM176 362h1v2h-1zM177 361h1v3h-1zM178 359h1v3h-1zM179 359h1v4h-1zM180 361h1v2h-1zM181 361h1v2h-1zM182 362h1v1h-1zM183 361h1v2h-1zM184 361h1v3h-1zM185 363h1v1h-1zM186 361h1v3h-1zM187 361h1v2h-1zM188 361h1v2h-1zM189 361h1v3h-1zM190 363h1v1h-1zM191 362h1v2h-1zM192 362h1v1h-1zM193 362h1v1h-1zM194 361h1v2h-1zM195 361h1v3h-1zM196 362h1v2h-1zM197 361h1v2h-1zM198 361h1v3h-1zM199 361h1v3h-1zM200 361h1v2h-1zM201 359h1v4h-1zM202 359h1v3h-1zM203 361h1v1h-1zM204 361h1v3h-1zM205 361h1v3h-1zM206 361h1v3h-1zM207 362h1v2h-1zM208 362h1v1h-1zM209 361h1v2h-1zM210 361h1v2h-1zM211 362h1v2h-1zM212 362h1v2h-1zM213 362h1v1h-1zM214 362h1v1h-1zM215 362h1v2h-1zM216 363h1v1h-1zM217 362h1v2h-1zM218 362h1v1h-1zM219 362h1v2h-1zM220 363h1v1h-1zM221 363h1v5h-1zM222 367h1v1h-1zM223 367h1v1h-1zM224 366h1v2h-1zM225 366h1v1h-1zM226 366h1v3h-1zM227 367h1v2h-1zM228 367h1v1h-1zM229 367h1v2h-1zM230 366h1v3h-1zM231 366h1v2h-1zM232 366h1v2h-1zM233 365h1v2h-1zM234 365h1v2h-1zM235 366h1v1h-1zM236 366h1v2h-1zM237 367h1v1h-1zM238 367h1v1h-1zM239 366h1v2h-1zM240 366h1v2h-1zM241 366h1v2h-1zM242 366h1v1h-1zM243 366h1v2h-1zM244 367h1v1h-1zM245 367h1v1h-1zM246 366h1v2h-1zM247 366h1v3h-1zM248 366h1v3h-1zM249 366h1v3h-1zM250 368h1v1h-1zM251 366h1v3h-1zM252 366h1v2h-1zM253 366h1v2h-1zM254 366h1v1h-1zM255 366h1v1h-1zM256 365h1v2h-1zM257 365h1v3h-1zM258 367h1v2h-1zM259 367h1v2h-1zM260 367h1v1h-1zM261 366h1v2h-1zM262 363h1v4h-1zM263 363h1v5h-1zM264 366h1v2h-1zM265 366h1v1h-1zM266 366h1v3h-1zM267 366h1v3h-1zM268 366h1v3h-1zM269 367h1v2h-1zM270 367h1v1h-1zM271 366h1v2h-1zM272 365h1v2h-1zM273 365h1v4h-1zM274 367h1v2h-1zM275 366h1v2h-1zM276 366h1v1h-1zM277 365h1v2h-1zM278 365h1v3h-1zM279 367h1v2h-1zM280 366h1v3h-1zM281 366h1v2h-1zM282 367h1v1h-1zM283 367h1v2h-1zM284 367h1v2h-1zM285 366h1v2h-1zM286 366h1v3h-1zM287 367h1v2h-1zM288 366h1v2h-1zM289 365h1v2h-1zM290 364h1v2h-1zM291 364h1v4h-1zM292 366h1v2h-1zM293 366h1v2h-1zM294 367h1v1h-1zM295 367h1v1h-1zM296 367h1v2h-1zM297 367h1v2h-1zM298 365h1v3h-1zM299 365h1v3h-1zM300 366h1v2h-1zM301 366h1v1h-1zM302 366h1v1h-1zM303 366h1v3h-1zM304 367h1v2h-1zM305 367h1v1h-1zM306 367h1v1h-1zM307 365h1v3h-1zM308 364h1v2h-1zM309 364h1v3h-1zM310 366h1v1h-1zM311 366h1v2h-1zM312 367h1v2h-1zM313 367h1v2h-1zM314 366h1v2h-1zM315 366h1v2h-1zM316 366h1v2h-1zM317 364h1v3h-1zM318 364h1v2h-1zM319 365h1v3h-1zM320 367h1v2h-1zM321 365h1v4h-1zM322 365h1v4h-1zM323 368h1v1h-1zM324 366h1v3h-1zM325 366h1v1h-1zM326 366h1v3h-1zM327 366h1v3h-1zM328 366h1v2h-1zM329 366h1v2h-1zM330 366h1v1h-1zM331 365h1v2h-1zM332 365h1v1h-1zM333 365h1v3h-1zM334 366h1v2h-1zM335 366h1v1h-1zM336 366h1v1h-1zM337 366h1v3h-1zM338 366h1v3h-1zM339 366h1v2h-1zM340 367h1v1h-1zM341 366h1v2h-1zM342 366h1v1h-1zM343 366h1v2h-1zM344 365h1v3h-1zM345 365h1v3h-1zM346 366h1v2h-1zM347 366h1v1h-1zM348 366h1v1h-1zM349 366h1v1h-1zM350 365h1v2h-1zM351 365h1v2h-1zM352 366h1v1h-1zM353 365h1v2h-1zM354 365h1v3h-1zM355 365h1v3h-1zM356 365h1v3h-1zM357 367h1v1h-1zM358 366h1v2h-1zM359 366h1v2h-1zM360 366h1v2h-1zM361 365h1v2h-1zM362 365h1v2h-1zM363 366h1v1h-1zM364 365h1v2h-1zM365 365h1v1h-1zM366 365h1v2h-1zM367 366h1v1h-1zM368 366h1v1h-1zM369 365h1v2h-1zM370 365h1v1h-1zM371 365h1v2h-1zM372 365h1v2h-1zM373 365h1v1h-1zM374 365h1v1h-1zM375 365h1v2h-1zM376 366h1v2h-1zM377 367h1v1h-1zM378 366h1v2h-1zM379 365h1v2h-1zM380 365h1v3h-1zM381 365h1v3h-1zM382 365h1v1h-1zM383 365h1v1h-1zM384 365h1v1h-1zM385 365h1v2h-1zM386 366h1v1h-1zM387 365h1v2h-1zM388 365h1v2h-1zM389 364h1v3h-1zM390 364h1v2h-1zM391 365h1v3h-1zM392 366h1v2h-1zM393 365h1v2h-1zM394 364h1v2h-1zM395 364h1v3h-1zM396 364h1v3h-1zM397 364h1v1h-1zM398 364h1v3h-1zM399 364h1v3h-1zM400 364h1v2h-1zM401 365h1v1h-1zM402 365h1v2h-1zM403 365h1v2h-1zM404 365h1v2h-1zM405 366h1v1h-1zM406 366h1v1h-1zM407 366h1v1h-1zM408 366h1v1h-1zM409 366h1v1h-1zM410 365h1v2h-1zM411 365h1v2h-1zM412 365h1v2h-1zM413 365h1v2h-1zM414 365h1v2h-1zM415 364h1v2h-1zM416 364h1v1h-1zM417 364h1v1h-1zM418 364h1v1h-1zM419 364h1v3h-1zM420 364h1v3h-1zM421 364h1v2h-1zM422 364h1v2h-1zM423 364h1v1h-1zM424 364h1v1h-1zM425 364h1v2h-1zM426 364h1v2h-1zM427 364h1v1h-1zM428 364h1v1h-1zM429 364h1v3h-1zM430 364h1v3h-1zM431 364h1v3h-1zM432 365h1v2h-1zM433 365h1v1h-1zM434 356h1v10h-1zM435 363h1v3h-1zM436 363h1v3h-1zM437 362h1v2h-1zM438 361h1v2h-1zM439 361h1v2h-1zM440 362h1v3h-1zM441 364h1v2h-1zM442 364h1v2h-1zM443 364h1v1h-1zM444 364h1v3h-1zM445 365h1v2h-1zM446 364h1v2h-1zM447 364h1v1h-1zM448 364h1v1h-1zM449 364h1v3h-1zM450 364h1v3h-1zM451 364h1v3h-1zM452 365h1v2h-1zM453 365h1v2h-1zM454 366h1v1h-1z" fill="#ff00ff"/><rect x="455" y="132" width="1" height="133" fill="#e4e4e4"/><rect x="455" y="294" width="1" height="133" fill="#e4e4e4"/></svg>
<!-- right panel groups -->
<div class="grp" style="left:491px;top:124px;width:139px;height:84px"></div>
<div class="grp" style="left:491px;top:215px;width:139px;height:204px"></div>
<div class="grp" style="left:491px;top:425px;width:139px;height:26px"></div>
<div class="grp" style="left:491px;top:457px;width:139px;height:56px"></div>
<!-- speed combo -->
<div class="sunken" style="left:500px;top:225px;width:84px;height:21px"></div>
<div class="raised2" style="left:566px;top:227px;width:16px;height:17px"></div>
<svg style="left:566px;top:227px" width="16" height="17" viewBox="0 0 16 17" shape-rendering="crispEdges"><path d="M4 6h7v1h-1v1h-1v1h-1v1h-1v-1h-1v-1h-1v-1h-1z" fill="#000"/></svg>
<div class="raised" style="left:592px;top:224px;width:23px;height:23px"></div>
<svg style="left:596px;top:227px" width="14" height="16" viewBox="0 0 14 16">
 <rect x="0.5" y="0.5" width="13" height="15" fill="#fff" stroke="#000" shape-rendering="crispEdges"/>
 <path d="M3.6 8.6V5.6Q3.6 4.5 4.7 4.5H7" stroke="#008000" stroke-width="1.7" fill="none"/><path d="M6.6 2.2L9.7 4.5 6.6 6.8z" fill="#008000"/>
 <path d="M10.4 7.4V10.4Q10.4 11.5 9.3 11.5H7" stroke="#008000" stroke-width="1.7" fill="none"/><path d="M7.4 9.2L4.3 11.5 7.4 13.8z" fill="#008000"/>
</svg>
<div class="sunken" style="left:554px;top:251px;width:60px;height:20px"></div>
<div class="sunken" style="left:554px;top:274px;width:60px;height:20px"></div>
<!-- checkboxes -->
<div class="sunken cb" style="left:502px;top:296px"></div>
<div class="sunken cb" style="left:502px;top:314px"></div>
<div class="sunken cb" style="left:502px;top:329px"></div>
<div class="sunken cb" style="left:502px;top:345px"></div>
<div class="sunken cb" style="left:502px;top:361px"></div>
<div class="sunken cb" style="left:502px;top:376px"></div>
<svg style="left:502px;top:296px" width="13" height="95" viewBox="0 0 13 95" shape-rendering="crispEdges">
 <defs><path id="ck" d="M3 5v3h1v1h1v1h1v-1h1v-1h1v-1h1v-1h1v-3h-1v1h-1v1h-1v1h-1v1h-1v-1h-1v-1z" fill="#000"/></defs>
 <use href="#ck" y="18"/><use href="#ck" y="33"/><use href="#ck" y="49"/><use href="#ck" y="65"/><use href="#ck" y="80"/>
</svg>
<div class="raised" style="left:527px;top:393px;width:98px;height:23px"></div>
<!-- bottom groups -->
<div class="grp" style="left:14px;top:457px;width:146px;height:57px"></div>
<div class="grp" style="left:172px;top:457px;width:146px;height:57px"></div>
<div class="grp" style="left:331px;top:457px;width:147px;height:42px"></div>
<div style="left:24px;top:452px;width:53px;height:12px;background:#d4d0c8"></div>
<div style="left:182px;top:452px;width:63px;height:12px;background:#d4d0c8"></div>
<div style="left:341px;top:452px;width:35px;height:12px;background:#d4d0c8"></div>
<div class="sq" style="left:24px;top:454px;background:#00ffff"></div>
<div class="sq" style="left:182px;top:454px;background:#ffff00"></div>
<div class="sq" style="left:341px;top:454px;background:#ff00ff"></div>
<div id="txt" style="left:0;top:0;width:645px;height:523px;will-change:transform">
<div class="t" style="left:23.00px;top:6.50px;letter-spacing:0.289px;color:#fff;font-weight:bold;">Nero CD-DVD Speed 4.7.7.16</div>
<div class="t" style="left:9.50px;top:25.50px;letter-spacing:-0.349px;">Файл</div>
<div class="t" style="left:47.50px;top:25.50px;letter-spacing:0.134px;">Запуск теста</div>
<div class="t" style="left:126.50px;top:25.50px;letter-spacing:0.027px;">Дополнительно</div>
<div class="t" style="left:218.00px;top:25.50px;letter-spacing:-0.600px;">Помощь</div>
<div class="t" style="left:173.00px;top:57.50px;letter-spacing:-0.461px;">[0:0]   BENQ DVD DD DW1640 BSRB</div>
<div class="t" style="left:502.00px;top:56.50px;letter-spacing:0.027px;">Старт</div>
<div class="t" style="left:578.00px;top:56.50px;letter-spacing:0.020px;">Выход</div>
<div class="t" style="left:18.00px;top:96.50px;letter-spacing:0.007px;">Создание диска</div>
<div class="t" style="left:112.50px;top:96.50px;letter-spacing:-0.040px;">Инф. о диске</div>
<div class="t" style="left:191.00px;top:94.50px;letter-spacing:0.091px;">Качество диска</div>
<div class="t" style="left:284.00px;top:96.50px;letter-spacing:0.022px;">Расширенные характеристики качества диска</div>
<div class="t ms" style="left:225.00px;top:115.50px;letter-spacing:-0.070px;">recorded with SATA</div>
<div class="t ms" style="left:333.00px;top:115.50px;letter-spacing:-0.051px;">Optiarc DVD RW A v1.01</div>
<div class="t" style="left:29.25px;top:122.50px;">50</div>
<div class="t" style="left:29.25px;top:149.50px;">40</div>
<div class="t" style="left:29.25px;top:176.50px;">30</div>
<div class="t" style="left:29.25px;top:202.50px;">20</div>
<div class="t" style="left:29.25px;top:229.50px;">10</div>
<div class="t" style="left:29.25px;top:284.50px;">10</div>
<div class="t" style="left:35.38px;top:311.50px;">8</div>
<div class="t" style="left:35.38px;top:338.50px;">6</div>
<div class="t" style="left:35.38px;top:364.50px;">4</div>
<div class="t" style="left:35.38px;top:391.50px;">2</div>
<div class="t" style="left:470.50px;top:239.50px;">2</div>
<div class="t" style="left:470.50px;top:222.50px;">4</div>
<div class="t" style="left:470.50px;top:206.50px;">6</div>
<div class="t" style="left:470.50px;top:189.50px;">8</div>
<div class="t" style="left:470.50px;top:172.50px;">10</div>
<div class="t" style="left:470.50px;top:156.50px;">12</div>
<div class="t" style="left:470.50px;top:139.50px;">14</div>
<div class="t" style="left:470.50px;top:122.50px;">16</div>
<div class="t" style="left:470.50px;top:391.50px;">4</div>
<div class="t" style="left:470.50px;top:364.50px;">8</div>
<div class="t" style="left:470.50px;top:338.50px;">12</div>
<div class="t" style="left:470.50px;top:311.50px;">16</div>
<div class="t" style="left:470.50px;top:284.50px;">20</div>
<div class="t" style="left:42.35px;top:267.50px;">0.0</div>
<div class="t" style="left:42.35px;top:429.50px;">0.0</div>
<div class="t" style="left:88.80px;top:267.50px;">0.5</div>
<div class="t" style="left:88.80px;top:429.50px;">0.5</div>
<div class="t" style="left:135.25px;top:267.50px;">1.0</div>
<div class="t" style="left:135.25px;top:429.50px;">1.0</div>
<div class="t" style="left:181.70px;top:267.50px;">1.5</div>
<div class="t" style="left:181.70px;top:429.50px;">1.5</div>
<div class="t" style="left:228.15px;top:267.50px;">2.0</div>
<div class="t" style="left:228.15px;top:429.50px;">2.0</div>
<div class="t" style="left:274.60px;top:267.50px;">2.5</div>
<div class="t" style="left:274.60px;top:429.50px;">2.5</div>
<div class="t" style="left:321.05px;top:267.50px;">3.0</div>
<div class="t" style="left:321.05px;top:429.50px;">3.0</div>
<div class="t" style="left:367.50px;top:267.50px;">3.5</div>
<div class="t" style="left:367.50px;top:429.50px;">3.5</div>
<div class="t" style="left:413.95px;top:267.50px;">4.0</div>
<div class="t" style="left:413.95px;top:429.50px;">4.0</div>
<div class="t" style="left:460.40px;top:267.50px;">4.5</div>
<div class="t" style="left:460.40px;top:429.50px;">4.5</div>
<div class="t lg ms" style="left:500.00px;top:119.10px;letter-spacing:-0.076px;">Инф. о диске</div>
<div class="t ms" style="left:500.00px;top:133.50px;">Тип:</div>
<div class="t ms" style="left:500.00px;top:150.50px;">ID:</div>
<div class="t ms" style="left:500.00px;top:168.50px;">Дата:</div>
<div class="t ms" style="left:500.00px;top:186.50px;">Метка:</div>
<div class="t ms" style="left:545.50px;top:133.50px;letter-spacing:-0.103px;color:#00007b;">DVD-RW</div>
<div class="t ms" style="left:545.50px;top:150.50px;letter-spacing:-0.836px;color:#00007b;">MKM</div>
<div class="t ms" style="left:545.50px;top:168.50px;letter-spacing:-0.130px;color:#00007b;">17 Aug 2009</div>
<div class="t ms" style="left:545.50px;top:186.50px;letter-spacing:-0.203px;color:#00007b;">CDS_TEST_B2</div>
<div class="t lg ms" style="left:500.00px;top:210.50px;letter-spacing:0.402px;">Установки</div>
<div class="t ms" style="left:505.50px;top:229.50px;">4 X</div>
<div class="t ms" style="left:502.50px;top:256.50px;">Старт:</div>
<div class="t ms" style="left:502.50px;top:279.50px;">Конец:</div>
<div class="t ms" style="left:557.50px;top:254.50px;letter-spacing:-0.172px;">0000 MB</div>
<div class="t ms" style="left:557.50px;top:277.50px;letter-spacing:-0.172px;">4489 MB</div>
<div class="t ms" style="left:520.50px;top:296.50px;letter-spacing:-0.014px;">Быстр.скан.</div>
<div class="t ms" style="left:520.50px;top:314.50px;letter-spacing:-0.206px;">Отобр. C1/PIE</div>
<div class="t ms" style="left:520.50px;top:329.50px;letter-spacing:-0.155px;">Отобр. C2/PIF</div>
<div class="t ms" style="left:520.50px;top:345.50px;letter-spacing:-0.289px;">Отобр. Jitter</div>
<div class="t ms" style="left:520.50px;top:361.50px;letter-spacing:-0.075px;">Отобр. скор. чтения</div>
<div class="t ms" style="left:520.50px;top:376.50px;letter-spacing:0.066px;">Отобр. скор. записи</div>
<div class="t ms" style="left:556.00px;top:397.50px;letter-spacing:-0.372px;">Расшир.</div>
<div class="t ms" style="left:502.50px;top:433.50px;letter-spacing:0.109px;">Индекс</div>
<div class="t ms" style="left:608.75px;top:433.50px;color:#00007b;">99</div>
<div class="t ms" style="left:502.50px;top:466.50px;letter-spacing:-0.160px;">Выполнено:</div>
<div class="t ms" style="left:590.30px;top:466.50px;color:#00007b;">100 %</div>
<div class="t ms" style="left:502.50px;top:482.50px;letter-spacing:-0.076px;">Положение:</div>
<div class="t ms" style="left:579.00px;top:482.50px;letter-spacing:-0.339px;color:#00007b;">4488 MB</div>
<div class="t ms" style="left:502.50px;top:497.50px;letter-spacing:-0.070px;">Скорость:</div>
<div class="t ms" style="left:589.69px;top:497.50px;color:#00007b;">4.17 X</div>
<div class="t lg ms" style="left:35.50px;top:451.50px;letter-spacing:-0.488px;">PI Errors</div>
<div class="t lg ms" style="left:193.50px;top:451.50px;letter-spacing:-0.388px;">PI Failures</div>
<div class="t lg ms" style="left:352.00px;top:451.50px;letter-spacing:-0.369px;">Jitter</div>
<div class="t ms" style="left:22.50px;top:467.50px;">Среднее:</div>
<div class="t ms" style="left:129.08px;top:467.50px;color:#00007b;">3.17</div>
<div class="t ms" style="left:22.50px;top:482.50px;">Максим.:</div>
<div class="t ms" style="left:138.25px;top:482.50px;color:#00007b;">22</div>
<div class="t ms" style="left:22.50px;top:497.50px;">Итого:</div>
<div class="t ms" style="left:119.91px;top:497.50px;color:#00007b;">56900</div>
<div class="t ms" style="left:181.50px;top:467.50px;">Среднее:</div>
<div class="t ms" style="left:287.58px;top:467.50px;color:#00007b;">0.01</div>
<div class="t ms" style="left:181.50px;top:482.50px;">Максим.:</div>
<div class="t ms" style="left:302.88px;top:482.50px;color:#00007b;">2</div>
<div class="t ms" style="left:181.50px;top:497.50px;">Итого:</div>
<div class="t ms" style="left:284.52px;top:497.50px;color:#00007b;">1928</div>
<div class="t ms" style="left:340.50px;top:467.50px;">Среднее:</div>
<div class="t ms" style="left:434.25px;top:467.50px;color:#00007b;">8.98 %</div>
<div class="t ms" style="left:340.50px;top:482.50px;">Максим.:</div>
<div class="t ms" style="left:435.06px;top:482.50px;color:#00007b;">11.2 %</div>
<div class="t ms" style="left:340.50px;top:501.50px;letter-spacing:-0.502px;">Сбои PO:</div>
<div class="t ms" style="left:462.38px;top:501.50px;color:#00007b;">0</div>
</div>
</div>
</body></html>
